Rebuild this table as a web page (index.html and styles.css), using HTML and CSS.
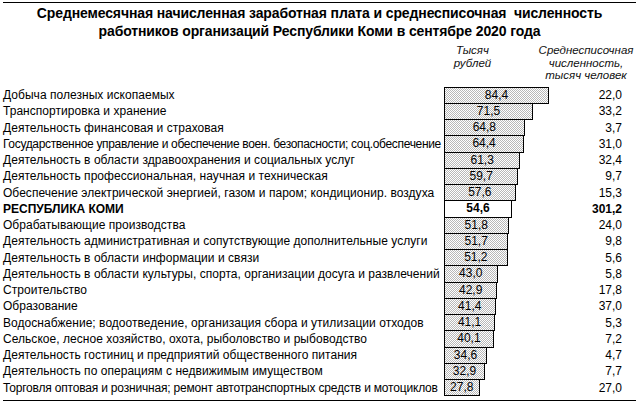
FILE: index.html
```html
<!DOCTYPE html>
<html lang="ru">
<head>
<meta charset="utf-8">
<link rel="stylesheet" href="styles.css">
</head>
<body>
<div class="frame">
  <h1 class="title">Среднемесячная начисленная заработная плата и среднесписочная&nbsp; численность<br>работников организаций Республики Коми в сентябре 2020 года</h1>
  <div class="head">
    <div class="head-label"></div>
    <div class="head-wage">Тысяч<br>рублей</div>
    <div class="head-staff">Среднесписочная<br>численность,<br>тысяч человек</div>
  </div>
  <div class="rows">
    <div class="row"><div class="label">Добыча полезных ископаемых</div><div class="barcell"><div class="bar" style="width:105px">84,4</div></div><div class="num">22,0</div></div>
    <div class="row"><div class="label">Транспортировка и хранение</div><div class="barcell"><div class="bar" style="width:89px">71,5</div></div><div class="num">33,2</div></div>
    <div class="row"><div class="label">Деятельность финансовая и страховая</div><div class="barcell"><div class="bar" style="width:80.7px">64,8</div></div><div class="num">3,7</div></div>
    <div class="row"><div class="label tight">Государственное управление и обеспечение воен. безопасности; соц.обеспечение</div><div class="barcell"><div class="bar" style="width:80.2px">64,4</div></div><div class="num">31,0</div></div>
    <div class="row"><div class="label">Деятельность в области здравоохранения и социальных услуг</div><div class="barcell"><div class="bar" style="width:76.3px">61,3</div></div><div class="num">32,4</div></div>
    <div class="row"><div class="label">Деятельность профессиональная, научная и техническая</div><div class="barcell"><div class="bar" style="width:74.3px">59,7</div></div><div class="num">9,7</div></div>
    <div class="row"><div class="label">Обеспечение электрической энергией, газом и паром; кондиционир. воздуха</div><div class="barcell"><div class="bar" style="width:71.7px">57,6</div></div><div class="num">15,3</div></div>
    <div class="row total"><div class="label">РЕСПУБЛИКА КОМИ</div><div class="barcell"><div class="bar" style="width:68px">54,6</div></div><div class="num">301,2</div></div>
    <div class="row"><div class="label">Обрабатывающие производства</div><div class="barcell"><div class="bar" style="width:64.5px">51,8</div></div><div class="num">24,0</div></div>
    <div class="row"><div class="label">Деятельность административная и сопутствующие дополнительные услуги</div><div class="barcell"><div class="bar" style="width:64.4px">51,7</div></div><div class="num">9,8</div></div>
    <div class="row"><div class="label">Деятельность в области информации и связи</div><div class="barcell"><div class="bar" style="width:63.7px">51,2</div></div><div class="num">5,6</div></div>
    <div class="row"><div class="label">Деятельность в области культуры, спорта, организации досуга и развлечений</div><div class="barcell"><div class="bar" style="width:53.5px">43,0</div></div><div class="num">5,8</div></div>
    <div class="row"><div class="label">Строительство</div><div class="barcell"><div class="bar" style="width:53.4px">42,9</div></div><div class="num">17,8</div></div>
    <div class="row"><div class="label">Образование</div><div class="barcell"><div class="bar" style="width:51.5px">41,4</div></div><div class="num">37,0</div></div>
    <div class="row"><div class="label">Водоснабжение; водоотведение, организация сбора и утилизации отходов</div><div class="barcell"><div class="bar" style="width:51.2px">41,1</div></div><div class="num">5,3</div></div>
    <div class="row"><div class="label">Сельское, лесное хозяйство, охота, рыболовство и рыбоводство</div><div class="barcell"><div class="bar" style="width:49.9px">40,1</div></div><div class="num">7,2</div></div>
    <div class="row"><div class="label">Деятельность гостиниц и предприятий общественного питания</div><div class="barcell"><div class="bar" style="width:43.1px">34,6</div></div><div class="num">4,7</div></div>
    <div class="row"><div class="label">Деятельность по операциям с недвижимым имуществом</div><div class="barcell"><div class="bar" style="width:41px">32,9</div></div><div class="num">7,7</div></div>
    <div class="row"><div class="label snug">Торговля оптовая и розничная; ремонт автотранспортных средств и мотоциклов</div><div class="barcell"><div class="bar" style="width:35.5px">27,8</div></div><div class="num">27,0</div></div>
  </div>
</div>
</body>
</html>
```

FILE: styles.css
```css
* { box-sizing: border-box; }
html, body { margin: 0; padding: 0; background: #fff; }
body {
  width: 636px;
  height: 406px;
  overflow: hidden;
  font-family: "Liberation Sans", Arial, sans-serif;
  color: #000;
}
.frame {
  margin: 2px 0 0 3px;
  width: 633px;
  border-top: 1px solid #000;
  border-bottom: 1px solid #000;
  padding-bottom: 5px;
}
.title {
  margin: 0;
  padding-top: 1px;
  font-size: 14px;
  font-weight: bold;
  line-height: 18px;
  text-align: center;
  letter-spacing: -0.12px;
}
.head {
  display: grid;
  grid-template-columns: 441px 57px 1fr;
  margin-top: 4px;
  font-size: 11.5px;
  font-style: italic;
  line-height: 12.5px;
  color: #111;
}
.head-wage { text-align: center; }
.head-staff { text-align: center; padding-left: 35px; }
.rows {
  margin-top: 5px;
  display: grid;
  grid-auto-rows: 16.25px;
}
.row {
  display: grid;
  grid-template-columns: 441px 1fr 60px;
  align-items: center;
  font-size: 12px;
}
.label {
  white-space: nowrap;
  letter-spacing: 0.04px;
}
.label.tight { letter-spacing: -0.33px; }
.label.snug { letter-spacing: -0.19px; }
.barcell {
  align-self: stretch;
}
.bar {
  height: 17.25px;
  border: 1px solid #000;
  background: repeating-conic-gradient(#b8b8b8 0 25%, #fff 0 50%) 0 0 / 2px 2px;
  text-align: center;
  line-height: 15px;
}
.num {
  text-align: right;
  padding-right: 14px;
}
.total { font-weight: bold; }
.total .label { letter-spacing: 0; }
.total .bar { background: #fff; }
```
